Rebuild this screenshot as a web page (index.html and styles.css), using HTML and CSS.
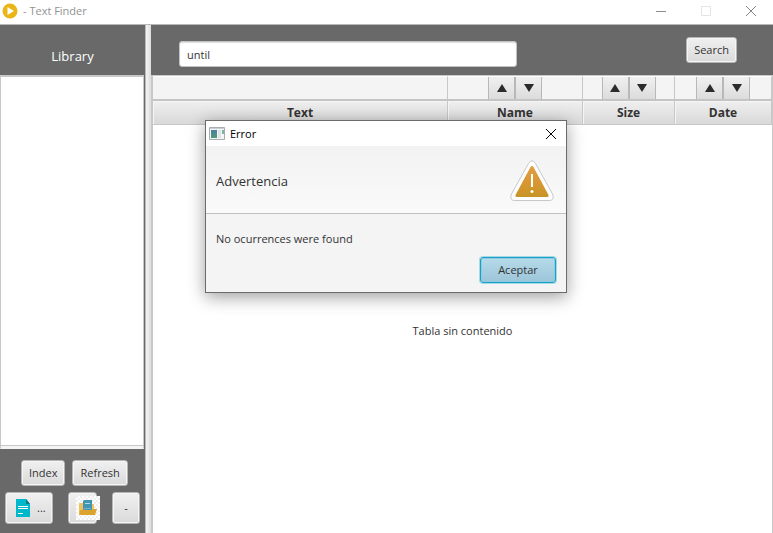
FILE: index.html
```html
<!DOCTYPE html>
<html lang="en">
<head>
<meta charset="utf-8">
<title>Text Finder</title>
<link rel="stylesheet" href="styles.css">
</head>
<body>
<header class="titlebar">
  <svg class="app-icon" width="16" height="16" viewBox="0 0 16 16" aria-hidden="true"><circle cx="8" cy="8" r="7.5" fill="#e9b616"/><path d="M5.500 4v8l6.500-4z" fill="#fff"/></svg>
  <h1 class="app-title">- Text Finder</h1>
  <button class="win-button" type="button" aria-label="Minimize"><svg width="12" height="12" viewBox="0 0 12 12"><path d="M1 6.500h10" stroke="#8d8d8d"/></svg></button>
  <button class="win-button" type="button" aria-label="Maximize" disabled><svg width="12" height="12" viewBox="0 0 12 12"><path d="M1.500 1.500h9v9h-9z" fill="none" stroke="#e4e4e4"/></svg></button>
  <button class="win-button" type="button" aria-label="Close"><svg width="12" height="12" viewBox="0 0 12 12"><path d="M1 1l10 10M11 1L1 11" stroke="#858585"/></svg></button>
</header>
<main class="split">
  <aside class="library">
    <h2 class="library-title">Library</h2>
    <div class="library-list"></div>
    <div class="library-actions">
      <div class="button-row text-row">
        <button class="button" type="button">Index</button>
        <button class="button" type="button">Refresh</button>
      </div>
      <div class="button-row icon-row">
        <button class="button tall file-button" type="button"><svg width="16" height="20" viewBox="0 0 16 20" aria-hidden="true"><path d="M1 1h10l4 5v13H1z" fill="#00b8cc"/><path d="M11 1l4 5h-4z" fill="#087887"/><path d="M3 8.500h10M3 10.500h10M3 15.500h5" stroke="#fff"/></svg>...</button>
        <button class="button tall folder-button" type="button" aria-label="Open folder"><svg width="24" height="24" viewBox="0 0 24 24"><defs><pattern id="checks" width="4" height="4" patternUnits="userSpaceOnUse"><path d="M0 0h4v4H0z" fill="#fff"/><path d="M0 0h2v2H0zM2 2h2v2H2z" fill="#efefef"/></pattern></defs><path d="M0 0h24v24H0z" fill="url(#checks)"/><path d="M3 8q0-1 1-1h3l2 1h9v9H3z" fill="#f2c35d"/><path d="M8 4h8v10H7V5z" fill="#3f97b5"/><path d="M9 7.500h5" stroke="#b9d7df"/><path d="M8 12.500h7" stroke="#7ab1c4"/><path d="M4 14.500L6 13.500h2l1 .5h7l1-1h4L19 19H4q-1 0-1-1z" fill="#dca42e"/></svg></button>
        <button class="button tall dash-button" type="button">-</button>
      </div>
    </div>
  </aside>
  <div class="divider"></div>
  <section class="results">
    <form class="search-bar">
      <input class="search-input" type="text" value="until" aria-label="Search text">
      <button class="button" type="button">Search</button>
    </form>
    <div class="table-view">
      <table class="result-table">
        <colgroup><col><col class="col-name"><col class="col-size"><col class="col-date"></colgroup>
        <thead>
          <tr class="sort-row">
            <td></td>
            <td><div class="sort-pair"><button class="sort" type="button" aria-label="Name ascending"><svg width="10" height="8" viewBox="0 0 10 8"><path d="M5 0l5 8H0z"/></svg></button><button class="sort" type="button" aria-label="Name descending"><svg width="10" height="8" viewBox="0 0 10 8"><path d="M0 0h10L5 8z"/></svg></button></div></td>
            <td><div class="sort-pair"><button class="sort" type="button" aria-label="Size ascending"><svg width="10" height="8" viewBox="0 0 10 8"><path d="M5 0l5 8H0z"/></svg></button><button class="sort" type="button" aria-label="Size descending"><svg width="10" height="8" viewBox="0 0 10 8"><path d="M0 0h10L5 8z"/></svg></button></div></td>
            <td><div class="sort-pair"><button class="sort" type="button" aria-label="Date ascending"><svg width="10" height="8" viewBox="0 0 10 8"><path d="M5 0l5 8H0z"/></svg></button><button class="sort" type="button" aria-label="Date descending"><svg width="10" height="8" viewBox="0 0 10 8"><path d="M0 0h10L5 8z"/></svg></button></div></td>
          </tr>
          <tr class="head-row"><th scope="col">Text</th><th scope="col">Name</th><th scope="col">Size</th><th scope="col">Date</th></tr>
        </thead>
      </table>
      <p class="placeholder">Tabla sin contenido</p>
    </div>
  </section>
</main>
<div class="dialog" role="alertdialog" aria-labelledby="dialog-title" aria-describedby="dialog-text">
  <div class="dialog-bar">
    <svg width="16" height="14" viewBox="0 0 16 14" aria-hidden="true"><defs><linearGradient id="pane" x2="0" y2="1"><stop stop-color="#4c7ea3"/><stop offset="1" stop-color="#4f9b78"/></linearGradient></defs><path d="M.5 .5h15v12H.5z" fill="#f3f5f6" stroke="#a8adb2"/><path d="M1 1.500h14" stroke="#c9ced2"/><path d="M2 3h6v8H2z" fill="url(#pane)"/><path d="M9 3h3v8H9z" fill="#dfe3e5"/><path d="M13 3h2v4h-2z" fill="#7fb3a5"/></svg>
    <h2 class="dialog-title" id="dialog-title">Error</h2>
    <button class="dialog-close" type="button" aria-label="Close dialog"><svg width="12" height="12" viewBox="0 0 12 12"><path d="M1 1l10 10M11 1L1 11" stroke="#000"/></svg></button>
  </div>
  <div class="dialog-header">
    <p class="dialog-heading">Advertencia</p>
    <svg width="44" height="42" viewBox="0 0 44 42" aria-hidden="true"><defs><linearGradient id="warn" x2="0" y2="1"><stop stop-color="#e0a044"/><stop offset=".5" stop-color="#d99732"/><stop offset="1" stop-color="#c79427"/></linearGradient></defs><path d="M18.500 3.500Q22-2 25.500 3.500L42.500 34Q45 40.500 39 40.500H5Q-1 40.500 1.500 34z" fill="#fff" stroke="#c8c8c8"/><path d="M20.500 7Q22 5 23.500 7L38.500 35Q39 37 37.500 37H6.500Q5 37 5.500 35z" fill="url(#warn)"/><path d="M21 14h2v13h-2z" fill="#fff"/><circle cx="22" cy="31.500" r="1.500" fill="#fff"/></svg>
  </div>
  <p class="dialog-text" id="dialog-text">No ocurrences were found</p>
  <div class="dialog-footer"><button class="button primary" type="button">Aceptar</button></div>
</div>
</body>
</html>
```
FILE: styles.css
```css
* { box-sizing: border-box; }

body {
  margin: 0;
  height: 100vh;
  display: flex;
  flex-direction: column;
  overflow: hidden;
  background: #fff;
  color: #333;
  font: 11px/16px "Open Sans", "Noto Sans", sans-serif;
}

h1, h2, p { margin: 0; font-weight: 400; }
button, input { font: inherit; color: inherit; }
svg { display: block; flex: none; }

.titlebar {
  display: flex;
  align-items: center;
  flex: none;
  height: 25px;
  padding: 0 0 2px 2px;
  border-bottom: 1px solid #b5b9b9;
}
.app-title { flex: 1; padding-left: 5px; font-size: 11px; color: #939393; }
.win-button {
  display: flex;
  align-items: center;
  justify-content: center;
  width: 45px;
  height: 22px;
  padding: 0;
  border: 0;
  background: none;
}

.split { display: flex; flex: 1; min-height: 0; }
.library {
  display: flex;
  flex-direction: column;
  flex: none;
  width: 145px;
  background: #696969;
}
.library-title {
  height: 50px;
  padding-top: 21px;
  text-align: center;
  font-size: 13px;
  line-height: 20px;
  color: #fff;
}
.library-list {
  flex: 1;
  margin-right: 1px;
  border: 1px solid #c8c8c8;
  border-top-width: 2px;
  border-bottom-color: #f4f4f4;
  background: #fff;
  box-shadow: inset 0 -2px #f4f4f4, inset 0 -3px #c8c8c8;
}
.library-actions { flex: none; padding: 11px 5px 9px; }
.button-row { display: flex; }
.text-row { gap: 7px; padding-left: 16px; }
.icon-row { justify-content: space-between; margin-top: 6px; }

.button {
  height: 26px;
  padding: 0 7px;
  border: 1px solid #b5b5b5;
  border-radius: 3px;
  background: linear-gradient(#f0f0f0, #dadada);
  box-shadow: inset 0 0 0 1px #f5f5f5;
  white-space: nowrap;
}
.tall { height: 32px; }
.file-button { display: flex; align-items: center; gap: 6px; width: 48px; padding: 0 9px; }
.folder-button { display: flex; align-items: center; width: 29px; padding: 0 0 0 7px; margin-right: 1px; }
.dash-button { width: 28px; }

.divider {
  flex: none;
  width: 6px;
  border-left: 1px solid #bababa;
  background: linear-gradient(90deg, #f4f4f4, #dcdcdc);
}
.results { display: flex; flex-direction: column; flex: 1; min-width: 0; }
.search-bar {
  display: flex;
  justify-content: space-between;
  align-items: flex-start;
  flex: none;
  height: 50px;
  padding: 12px 36px 0 28px;
  background: #696969;
}
.search-input {
  width: 338px;
  height: 26px;
  margin-top: 4px;
  padding: 0 7px;
  border: 1px solid #c3c3c3;
  border-radius: 3px;
  background: #fff;
  box-shadow: inset 0 1px 1px #ddd;
}

.table-view {
  display: flex;
  flex-direction: column;
  flex: 1;
  border: solid #c8c8c8;
  border-width: 1px 1px 0 2px;
}
.result-table { width: 100%; table-layout: fixed; border-collapse: separate; border-spacing: 0; }
.col-name { width: 135px; }
.col-size { width: 92px; }
.col-date { width: 97px; }
.result-table td, .result-table th { padding: 0; border-right: 1px solid #c8c8c8; }
.result-table td { height: 25px; border-top: 1px solid #fff; border-bottom: 2px solid #c4c4c4; background: #f4f4f4; vertical-align: top; }
.result-table th {
  height: 24px;
  border-bottom: 1px solid #c8c8c8;
  background: linear-gradient(#efefef, #d9d9d9);
  box-shadow: inset 1px 1px #f5f5f5;
  font-size: 12px;
  font-weight: 700;
}
.sort-pair { display: flex; justify-content: center; }
.sort {
  display: flex;
  align-items: center;
  justify-content: center;
  width: 27px;
  height: 22px;
  padding: 0;
  border: solid #b8b8b8;
  border-width: 0 1px;
  background: linear-gradient(#f0f0f0, #dcdcdc);
  fill: #2b2b2b;
}
.placeholder {
  display: flex;
  flex: 1;
  align-items: center;
  justify-content: center;
  padding-top: 4px;
}

.dialog {
  position: absolute;
  top: 120px;
  left: 205px;
  width: 362px;
  border: 1px solid #6b6b6b;
  background: #f4f4f4;
  box-shadow: 0 4px 16px rgba(0, 0, 0, .38);
}
.dialog-bar { display: flex; align-items: center; height: 25px; padding: 0 9px 0 3px; background: #fff; color: #000; }
.dialog-title { flex: 1; padding-left: 5px; font-size: 11px; }
.dialog-close { padding: 0; border: 0; background: none; }
.dialog-header {
  display: flex;
  align-items: center;
  justify-content: space-between;
  height: 68px;
  padding: 2px 12px 0 10px;
  border-bottom: 1px solid #c0c0c0;
  background: linear-gradient(#f2f2f2, #fafafa);
}
.dialog-heading { font-size: 13px; line-height: 20px; }
.dialog-text { padding: 17px 10px 10px; }
.dialog-footer { display: flex; justify-content: flex-end; padding: 0 10px 9px; }
.primary {
  width: 76px;
  border: 1px solid #1a9fc6;
  background: linear-gradient(#b6dbea, #9cc5d8);
  box-shadow: 0 0 0 1px #a6d9e8, inset 0 0 0 1px #8fcbe0;
}
```
